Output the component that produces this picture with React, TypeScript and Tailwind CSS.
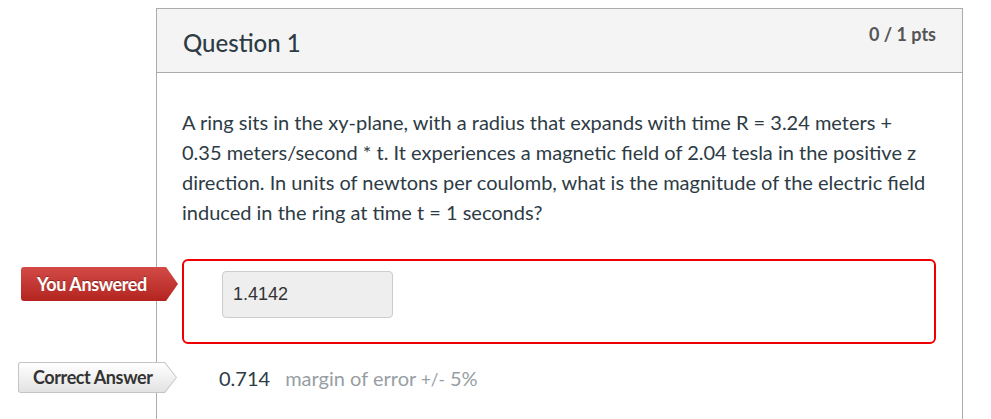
import React from "react";

const font = "font-['Lato','Noto_Sans',sans-serif]";

function AnswerLabel({ kind }: { kind: "wrong" | "correct" }) {
  if (kind === "wrong") {
    return (
      <div className="absolute left-[-161px] top-[8px] h-[34px] w-[157px] rounded-l-[3px] bg-gradient-to-b from-[#d34a46] to-[#b3231f] [clip-path:polygon(0_0,calc(100%-12px)_0,100%_50%,calc(100%-12px)_100%,0_100%)]">
        <div className="flex h-full items-center pl-[16px] text-[18px] font-bold tracking-[-0.4px] text-white [text-shadow:0_-1px_0_rgba(0,0,0,0.35)]">
          You Answered
        </div>
      </div>
    );
  }
  return (
    <div className="absolute left-[-164px] top-[4px] h-[31px] w-[159px] rounded-l-[3px] bg-[#c4c4c4] p-px [clip-path:polygon(0_0,calc(100%-12px)_0,100%_50%,calc(100%-12px)_100%,0_100%)]">
      <div className="flex h-full items-center rounded-l-[2px] bg-gradient-to-b from-[#ffffff] to-[#e3e3e3] pl-[14px] text-[18px] font-bold tracking-[-0.4px] text-[#333333] [clip-path:polygon(0_0,calc(100%-11.5px)_0,100%_50%,calc(100%-11.5px)_100%,0_100%)]">
        Correct Answer
      </div>
    </div>
  );
}

export default function App() {
  return (
    <div className={`min-h-[419px] overflow-hidden bg-white ${font}`}>
      <div className="ml-[156px] mt-[8px] h-[430px] w-[807px] border border-b-0 border-[#ababab]">
        {/* header */}
        <div className="flex h-[64px] justify-between border-b border-[#ababab] bg-[#f4f4f4] px-[26px]">
          <h2 className="self-center pt-[4px] text-[24px] font-medium text-[#2d3b45]">Question 1</h2>
          <div className="pt-[12px] text-[18px] font-bold text-[#555555]">0 / 1 pts</div>
        </div>

        {/* body */}
        <div className="pl-[25px] pr-[32px] pt-[34px]">
          <p className="text-[20px] leading-[30px] text-[#2d3b45]">
            A ring sits in the xy-plane, with a radius that expands with time R = 3.24 meters + 0.35
            meters/second * t. It experiences a magnetic field of 2.04 tesla in the positive z
            direction. In units of newtons per coulomb, what is the magnitude of the electric field
            induced in the ring at time t = 1 seconds?
          </p>

          <div className="mt-[32px] mr-[-6px]">
            <div className="relative">
              <AnswerLabel kind="wrong" />
              <div className="h-[85px] rounded-[6px] border-2 border-[#ee0000] pl-[38px] pt-[10px]">
                <div className="flex h-[47px] w-[171px] items-center rounded-[4px] border border-[#cccccc] bg-[#eeeeee] pl-[10px] font-['Liberation_Sans',Arial,sans-serif] text-[18px] text-[#333333]">
                  1.4142
                </div>
              </div>
            </div>

            <div className="relative mt-[14px] flex h-[40px] items-center pl-[37px]">
              <AnswerLabel kind="correct" />
              <span className="text-[20px] text-[#2d3b45]">0.714</span>
              <span className="ml-[15px] text-[20px] text-[#979ea3]">
                margin of error <span className="text-[17px]">+/-</span> 5%
              </span>
            </div>
          </div>
        </div>
      </div>
    </div>
  );
}
